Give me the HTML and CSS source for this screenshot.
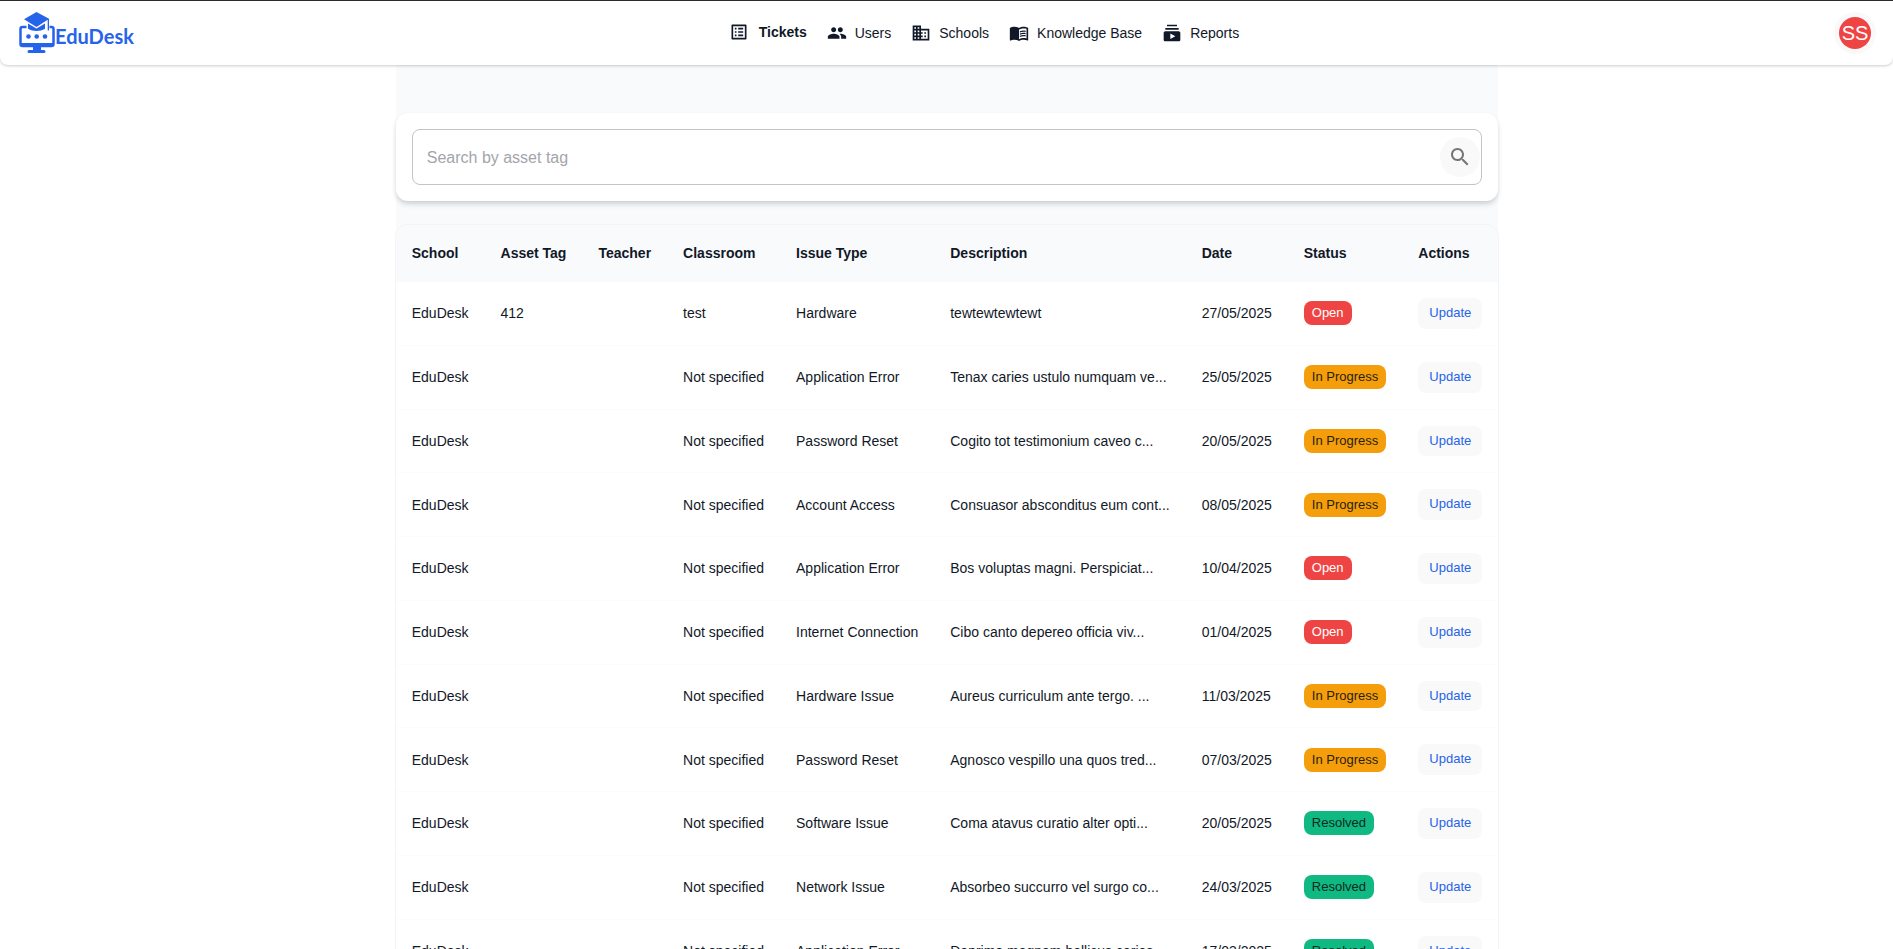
FILE: index.html
```html
<!DOCTYPE html>
<html lang="en">
<head>
<meta charset="utf-8">
<meta name="viewport" content="width=device-width, initial-scale=1">
<title>EduDesk - Tickets</title>
<link rel="stylesheet" href="styles.css">
</head>
<body>
<header class="topbar">
  <a class="brand" href="#">
    <svg class="brand-icon" viewBox="0 0 36 42" aria-hidden="true">
      <path d="M7.500 15H3.500a2 2 0 0 0-2 2v15a2 2 0 0 0 2 2h29a2 2 0 0 0 2-2V17a2 2 0 0 0-2-2h-2" fill="none" stroke="currentColor" stroke-width="2.500"/>
      <path d="M1.500 31h33v1.500a2 2 0 0 1-2 2h-29a2 2 0 0 1-2-2z"/>
      <path d="M14 34h8v4h3a1.500 1.500 0 0 1 0 3H10a1.500 1.500 0 0 1 0-3h4z"/>
      <path d="M17.500 0L30 6.800v11.700h-1.300V7.800L17.500 15 5 7.300z"/>
      <path d="M9 11.500l8.500 5 8.500-5v5.200c-5 3-12 3-17 0z"/>
      <circle cx="9.500" cy="24.500" r="2.300"/><circle cx="17.700" cy="24.500" r="2.300"/><circle cx="26" cy="24.500" r="2.300"/>
    </svg>
    <span class="brand-name">EduDesk</span>
  </a>
  <nav class="nav">
    <a class="nav-link active" href="#"><svg viewBox="0 0 24 24"><path d="M19 5v14H5V5h14m1.100-2H3.900c-.5 0-.9.4-.9.900v16.200c0 .4.400.900.900.900h16.200c.4 0 .9-.5.900-.9V3.900c0-.5-.5-.9-.9-.9zM11 7h6v2h-6V7zm0 4h6v2h-6v-2zm0 4h6v2h-6zM7 7h2v2H7zm0 4h2v2H7zm0 4h2v2H7z"/></svg>Tickets</a>
    <a class="nav-link" href="#"><svg viewBox="0 0 24 24"><path d="M16 11c1.660 0 2.990-1.340 2.990-3S17.660 5 16 5c-1.660 0-3 1.340-3 3s1.340 3 3 3zm-8 0c1.660 0 2.990-1.340 2.990-3S9.660 5 8 5C6.340 5 5 6.340 5 8s1.340 3 3 3zm0 2c-2.330 0-7 1.170-7 3.500V19h14v-2.500c0-2.330-4.670-3.500-7-3.500zm8 0c-.29 0-.62.020-.97.050 1.160.840 1.970 1.970 1.970 3.450V19h6v-2.500c0-2.330-4.670-3.500-7-3.500z"/></svg>Users</a>
    <a class="nav-link" href="#"><svg viewBox="0 0 24 24"><path d="M12 7V3H2v18h20V7H12zM6 19H4v-2h2v2zm0-4H4v-2h2v2zm0-4H4V9h2v2zm0-4H4V5h2v2zm4 12H8v-2h2v2zm0-4H8v-2h2v2zm0-4H8V9h2v2zm0-4H8V5h2v2zm10 12h-8v-2h2v-2h-2v-2h2v-2h-2V9h8v10zm-2-8h-2v2h2v-2zm0 4h-2v2h2v-2z"/></svg>Schools</a>
    <a class="nav-link" href="#"><svg viewBox="0 0 24 24"><path d="M21 5c-1.110-.35-2.330-.5-3.500-.5-1.950 0-4.050.4-5.500 1.500-1.450-1.100-3.550-1.500-5.500-1.500S2.450 4.900 1 6v14.650c0 .25.250.5.500.5.100 0 .150-.050.250-.050C3.100 20.450 5.050 20 6.500 20c1.950 0 4.050.4 5.500 1.500 1.350-.85 3.800-1.500 5.500-1.500 1.650 0 3.350.3 4.750 1.050.1.050.150.050.250.050.250 0 .5-.25.500-.5V6c-.6-.45-1.250-.75-2-1zm0 13.500c-1.100-.35-2.300-.5-3.500-.5-1.700 0-4.150.650-5.500 1.500V8c1.350-.85 3.800-1.500 5.500-1.500 1.200 0 2.400.150 3.500.500v11.500z"/><path d="M17.500 10.500c.880 0 1.730.090 2.500.260V9.240c-.79-.15-1.640-.24-2.500-.24-1.700 0-3.240.290-4.500.830v1.660c1.130-.64 2.700-.99 4.500-.99zM13 12.490v1.660c1.130-.64 2.700-.99 4.500-.99.880 0 1.730.090 2.500.260V11.900c-.79-.15-1.640-.24-2.500-.24-1.700 0-3.240.3-4.500.830zM17.500 14.330c-1.700 0-3.240.290-4.500.830v1.660c1.130-.64 2.700-.99 4.500-.99.880 0 1.730.090 2.500.260v-1.520c-.79-.16-1.640-.24-2.500-.24z"/></svg>Knowledge Base</a>
    <a class="nav-link" href="#"><svg viewBox="0 0 24 24"><path d="M20 8H4V6h16v2zm-2-6H6v2h12V2zm4 10v8c0 1.100-.9 2-2 2H4c-1.100 0-2-.9-2-2v-8c0-1.100.9-2 2-2h16c1.100 0 2 .9 2 2zm-6 4l-6-3.270v6.530L16 16z"/></svg>Reports</a>
  </nav>
  <button class="account" type="button" aria-label="Account"><span class="avatar">SS</span></button>
</header>
<main class="page">
  <form class="search-card">
    <div class="search-field">
      <input class="search-input" type="text" placeholder="Search by asset tag" aria-label="Search by asset tag">
      <button class="search-button" type="button" aria-label="Search"><svg viewBox="0 0 24 24"><path d="M15.500 14h-.79l-.28-.27C15.410 12.590 16 11.110 16 9.500 16 5.910 13.090 3 9.500 3S3 5.910 3 9.500 5.910 16 9.500 16c1.610 0 3.090-.59 4.230-1.570l.270.280v.790l5 4.990L20.490 19l-4.990-5zm-6 0C7.010 14 5 11.990 5 9.500S7.010 5 9.500 5 14 7.010 14 9.500 11.990 14 9.500 14z"/></svg></button>
    </div>
  </form>
  <div class="table-card">
    <table class="tickets">
      <thead><tr><th>School</th><th>Asset Tag</th><th>Teacher</th><th>Classroom</th><th>Issue Type</th><th>Description</th><th>Date</th><th>Status</th><th>Actions</th></tr></thead>
      <tbody>
        <tr><td>EduDesk</td><td>412</td><td></td><td>test</td><td>Hardware</td><td>tewtewtewtewt</td><td>27/05/2025</td><td><span class="chip open">Open</span></td><td><button class="update" type="button">Update</button></td></tr>
        <tr><td>EduDesk</td><td></td><td></td><td>Not specified</td><td>Application Error</td><td>Tenax caries ustulo numquam ve...</td><td>25/05/2025</td><td><span class="chip progress">In Progress</span></td><td><button class="update" type="button">Update</button></td></tr>
        <tr><td>EduDesk</td><td></td><td></td><td>Not specified</td><td>Password Reset</td><td>Cogito tot testimonium caveo c...</td><td>20/05/2025</td><td><span class="chip progress">In Progress</span></td><td><button class="update" type="button">Update</button></td></tr>
        <tr><td>EduDesk</td><td></td><td></td><td>Not specified</td><td>Account Access</td><td>Consuasor absconditus eum cont...</td><td>08/05/2025</td><td><span class="chip progress">In Progress</span></td><td><button class="update" type="button">Update</button></td></tr>
        <tr><td>EduDesk</td><td></td><td></td><td>Not specified</td><td>Application Error</td><td>Bos voluptas magni. Perspiciat...</td><td>10/04/2025</td><td><span class="chip open">Open</span></td><td><button class="update" type="button">Update</button></td></tr>
        <tr><td>EduDesk</td><td></td><td></td><td>Not specified</td><td>Internet Connection</td><td>Cibo canto depereo officia viv...</td><td>01/04/2025</td><td><span class="chip open">Open</span></td><td><button class="update" type="button">Update</button></td></tr>
        <tr><td>EduDesk</td><td></td><td></td><td>Not specified</td><td>Hardware Issue</td><td>Aureus curriculum ante tergo. ...</td><td>11/03/2025</td><td><span class="chip progress">In Progress</span></td><td><button class="update" type="button">Update</button></td></tr>
        <tr><td>EduDesk</td><td></td><td></td><td>Not specified</td><td>Password Reset</td><td>Agnosco vespillo una quos tred...</td><td>07/03/2025</td><td><span class="chip progress">In Progress</span></td><td><button class="update" type="button">Update</button></td></tr>
        <tr><td>EduDesk</td><td></td><td></td><td>Not specified</td><td>Software Issue</td><td>Coma atavus curatio alter opti...</td><td>20/05/2025</td><td><span class="chip resolved">Resolved</span></td><td><button class="update" type="button">Update</button></td></tr>
        <tr><td>EduDesk</td><td></td><td></td><td>Not specified</td><td>Network Issue</td><td>Absorbeo succurro vel surgo co...</td><td>24/03/2025</td><td><span class="chip resolved">Resolved</span></td><td><button class="update" type="button">Update</button></td></tr>
        <tr><td>EduDesk</td><td></td><td></td><td>Not specified</td><td>Application Error</td><td>Deprimo magnam bellicus caries...</td><td>17/03/2025</td><td><span class="chip resolved">Resolved</span></td><td><button class="update" type="button">Update</button></td></tr>
      </tbody>
    </table>
  </div>
</main>
</body>
</html>
```

FILE: styles.css
```css
* { box-sizing: border-box; }

html { scrollbar-width: none; }

body {
  margin: 0;
  border-top: 1px solid #2b2a33;
  background: #fff;
  color: #111827;
  font-family: "Liberation Sans", Arial, sans-serif;
  font-size: 14px;
}

.topbar {
  position: relative;
  display: flex;
  align-items: center;
  justify-content: space-between;
  min-height: 64px;
  padding: 0 17px 0 16px;
  border-radius: 0 0 8px 8px;
  background: #fff;
  box-shadow: 0 1px 3px rgba(0, 0, 0, 0.2);
}

.brand {
  display: flex;
  align-items: center;
  padding-left: 3px;
  color: #2563eb;
  text-decoration: none;
}

.brand-icon { width: 36px; height: 42px; fill: currentColor; }

.brand-name {
  padding-top: 6px;
  font-family: Lato, sans-serif;
  font-size: 20px;
  font-weight: 700;
  line-height: 24px;
}

.nav { display: flex; align-items: center; gap: 20px; }

.nav-link {
  display: flex;
  align-items: center;
  gap: 8px;
  color: #111827;
  line-height: 24px;
  text-decoration: none;
}

.nav-link svg { width: 20px; height: 20px; fill: currentColor; }

.nav-link.active {
  gap: 10px;
  border-bottom: 2px solid transparent;
  font-weight: 700;
}

.account {
  padding: 5px;
  border: 0;
  border-radius: 50%;
  background: #f9f9f9;
}

.avatar {
  display: grid;
  place-items: center;
  width: 32px;
  height: 32px;
  border-radius: 50%;
  background: #ef4444;
  color: #fff;
  font: 20px/32px "Liberation Sans", Arial, sans-serif;
}

.page {
  width: fit-content;
  min-width: min(100%, 1103px);
  margin: 0 auto;
  padding-top: 48px;
  border-left: 1px solid #fff;
  background: #f9fafc;
}

.search-card {
  margin-bottom: 24px;
  padding: 16px;
  border-radius: 12px;
  background: #fff;
  box-shadow: 0 4px 6px -1px rgba(0, 0, 0, 0.12), 0 2px 4px rgba(0, 0, 0, 0.08);
}

.search-field {
  display: flex;
  align-items: center;
  height: 56px;
  padding-right: 1px;
  border: 1px solid #c4c4c4;
  border-radius: 8px;
}

.search-input {
  flex: 1;
  min-width: 0;
  height: 100%;
  padding: 2px 14px 0;
  border: 0;
  outline: 0;
  background: transparent;
  color: #111827;
  font: 16px "Liberation Sans", Arial, sans-serif;
}

.search-input::placeholder { color: #a2a5ab; opacity: 1; }

.search-button {
  display: grid;
  place-items: center;
  width: 40px;
  height: 40px;
  padding: 0;
  border: 0;
  border-radius: 50%;
  background: #f9f9f9;
}

.search-button svg { width: 24px; height: 24px; fill: #757575; }

.table-card {
  border-radius: 12px 12px 0 0;
  background: #fff;
  box-shadow: 0 0 0 1px #f3f4f5;
}

.tickets {
  width: 100%;
  border-collapse: separate;
  border-spacing: 0;
  white-space: nowrap;
}

.tickets th,
.tickets td {
  padding: 16px;
  border-bottom: 1px solid #fcfcfc;
  text-align: left;
  vertical-align: middle;
  line-height: 20px;
}

.tickets th {
  border-bottom-color: #f9fafc;
  background: #f9fafc;
  line-height: 24px;
}

.tickets th:first-child { border-top-left-radius: 12px; }
.tickets th:last-child { border-top-right-radius: 12px; }

.chip {
  display: inline-block;
  padding: 0 8px;
  border-radius: 8px;
  font-size: 13px;
  line-height: 24px;
  vertical-align: middle;
}

.open { background: #ef4444; color: #fff; }
.progress { background: #f59e0b; color: #2a1f0c; }
.resolved { background: #10b981; color: #0b2a20; }

.update {
  display: block;
  min-width: 64px;
  padding: 4px 5px;
  border: 0;
  border-radius: 8px;
  background: #f9f9f9;
  color: #2563eb;
  font: 13px/1.75 "Liberation Sans", Arial, sans-serif;
}
```
